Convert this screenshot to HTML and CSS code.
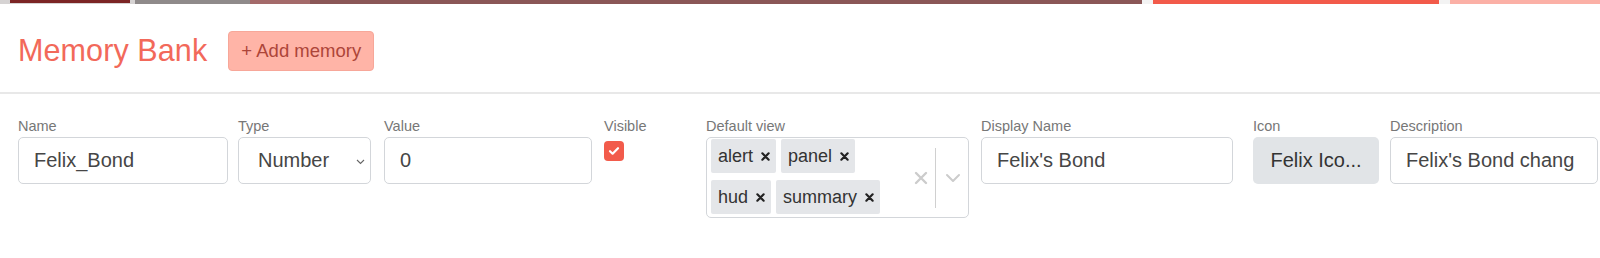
FILE: index.html
```html
<!DOCTYPE html>
<html>
<head>
<meta charset="utf-8">
<link rel="stylesheet" href="styles.css">
</head>
<body>
<div class="bg-strip">
  <div class="seg seg-a"><span class="blob"></span></div>
  <div class="seg seg-b"></div>
  <div class="seg seg-c"></div>
  <div class="seg seg-d"></div>
  <div class="seg seg-gap"></div>
  <div class="seg seg-e"></div>
  <div class="seg seg-gap"></div>
  <div class="seg seg-f"></div>
</div>
<div class="modal">
  <div class="modal-header">
    <h1 class="title">Memory Bank</h1>
    <button class="add-btn">+ Add memory</button>
  </div>
  <div class="form-row">
    <div class="col col-name">
      <label class="lbl">Name</label>
      <div class="input w-name">Felix_Bond</div>
    </div>
    <div class="col col-type">
      <label class="lbl">Type</label>
      <div class="input select w-type">Number
        <svg class="sel-caret" width="9" height="6" viewBox="0 0 9 6"><path d="M1 1l3.5 3.5L8 1" fill="none" stroke="#666" stroke-width="1.1"/></svg>
      </div>
    </div>
    <div class="col col-value">
      <label class="lbl">Value</label>
      <div class="input w-value">0</div>
    </div>
    <div class="col col-visible">
      <label class="lbl">Visible</label>
      <div class="checkbox">
        <svg width="12" height="10" viewBox="0 0 12 10"><path d="M2 5.2l2.6 2.5L10 2.2" fill="none" stroke="#fff" stroke-width="2.2" stroke-linecap="round" stroke-linejoin="round"/></svg>
      </div>
    </div>
    <div class="col col-default">
      <label class="lbl">Default view</label>
      <div class="multi">
        <div class="multi-values">
          <span class="tag">alert<svg class="tag-x" width="9" height="9" viewBox="0 0 10 10"><path d="M1.5 1.5l7 7M8.5 1.5l-7 7" stroke="#222" stroke-width="2.4" stroke-linecap="round"/></svg></span>
          <span class="tag">panel<svg class="tag-x" width="9" height="9" viewBox="0 0 10 10"><path d="M1.5 1.5l7 7M8.5 1.5l-7 7" stroke="#222" stroke-width="2.4" stroke-linecap="round"/></svg></span>
          <span class="tag">hud<svg class="tag-x" width="9" height="9" viewBox="0 0 10 10"><path d="M1.5 1.5l7 7M8.5 1.5l-7 7" stroke="#222" stroke-width="2.4" stroke-linecap="round"/></svg></span>
          <span class="tag">summary<svg class="tag-x" width="9" height="9" viewBox="0 0 10 10"><path d="M1.5 1.5l7 7M8.5 1.5l-7 7" stroke="#222" stroke-width="2.4" stroke-linecap="round"/></svg></span>
        </div>
        <div class="multi-ind">
          <svg class="clear" width="14" height="14" viewBox="0 0 14 14"><path d="M2 2l10 10M12 2L2 12" stroke="#cccccc" stroke-width="2.4" stroke-linecap="round"/></svg>
          <span class="sep"></span>
          <svg class="chev" width="16" height="10" viewBox="0 0 16 10"><path d="M2 2l6 6 6-6" fill="none" stroke="#cccccc" stroke-width="2" stroke-linecap="round" stroke-linejoin="round"/></svg>
        </div>
      </div>
    </div>
    <div class="col col-display">
      <label class="lbl">Display Name</label>
      <div class="input w-display">Felix's Bond</div>
    </div>
    <div class="col col-icon">
      <label class="lbl">Icon</label>
      <div class="icon-btn">Felix Ico...</div>
    </div>
    <div class="col col-desc">
      <label class="lbl">Description</label>
      <div class="input w-desc">Felix's Bond chang</div>
    </div>
  </div>
</div>
</body>
</html>
```
FILE: styles.css
```css
* { box-sizing: border-box; }
html, body { margin: 0; padding: 0; background: #ffffff; }
body {
  width: 1600px;
  height: 258px;
  overflow: hidden;
  font-family: "Liberation Sans", Arial, sans-serif;
  color: #333;
}
.bg-strip {
  display: flex;
  height: 4px;
  overflow: hidden;
}
.seg { height: 4px; }
.seg-a { width: 135px; background: #d6d3d3; position: relative; }
.blob { position: absolute; left: 10px; top: 0; width: 120px; height: 3px; background: #7b2424; }
.seg-b { width: 115px; background: #8f8a8a; }
.seg-c { width: 60px; background: #a46a6a; }
.seg-d { width: 832px; background: #8a5757; }
.seg-gap { width: 11px; background: #f3f3f3; }
.seg-e { width: 286px; background: #f25a4a; }
.seg-f { flex: 1; background: #fbb0a6; }

.modal-header {
  height: 90px;
  display: flex;
  align-items: center;
  padding-left: 18px;
  padding-top: 5px;
  border-bottom: 2px solid #e8e8e8;
}
.title {
  margin: 0;
  font-weight: 400;
  font-size: 30.5px;
  color: #f2695a;
  letter-spacing: 0.1px;
}
.add-btn {
  margin-left: 21px;
  height: 40px;
  width: 146px;
  padding: 0;
  font-family: inherit;
  font-size: 18.5px;
  color: #ad4539;
  background: #ffb4a7;
  border: 1px solid #f7a799;
  border-radius: 4px;
}

.form-row {
  display: grid;
  grid-template-columns: 220px 146px 220px 102px 275px 272px 137px 1fr;
  padding-left: 18px;
  padding-top: 24px;
}
.col { display: flex; flex-direction: column; align-items: flex-start; }
.lbl {
  font-size: 14.5px;
  line-height: 17px;
  color: #777;
  margin-bottom: 2px;
}
.input {
  height: 47px;
  border: 1px solid #d3d6da;
  border-radius: 5px;
  font-size: 20px;
  color: #464646;
  display: flex;
  align-items: center;
  padding-left: 15px;
  white-space: nowrap;
  overflow: hidden;
  background: #fff;
}
.w-name { width: 210px; }
.w-type { width: 133px; }
.w-value { width: 208px; padding-left: 15px; }
.w-display { width: 252px; }
.w-desc { width: 208px; }
.select { padding-left: 19px; position: relative; }
.sel-caret { position: absolute; right: 5px; top: 21px; }

.checkbox {
  width: 20px;
  height: 20px;
  margin-top: 4px;
  background: #f25b4b;
  border-radius: 4px;
  display: flex;
  align-items: center;
  justify-content: center;
}

.multi {
  width: 263px;
  height: 81px;
  border: 1px solid #d3d6da;
  border-radius: 5px;
  display: flex;
  background: #fff;
}
.multi-values {
  flex: 1;
  display: flex;
  flex-wrap: wrap;
  align-content: flex-start;
  gap: 7px 5px;
  padding: 1px 0 0 4px;
}
.tag {
  height: 34px;
  display: inline-flex;
  align-items: center;
  background: #e4e6e9;
  border-radius: 2px;
  font-size: 18px;
  color: #333;
  padding: 0 6px 0 7px;
}
.tag-x {
  display: block;
  margin-left: 8px;
}
.multi-ind {
  width: 58px;
  display: flex;
  align-items: center;
  padding-left: 4px;
}
.clear { display: block; }
.sep {
  width: 1px;
  height: 60px;
  background: #d0d0d0;
  margin-left: 7px;
  margin-right: 9px;
}
.chev { display: block; }

.icon-btn {
  width: 126px;
  height: 47px;
  border-radius: 5px;
  background: #e1e4e7;
  font-size: 20px;
  color: #333;
  display: flex;
  align-items: center;
  justify-content: center;
  white-space: nowrap;
}
```
